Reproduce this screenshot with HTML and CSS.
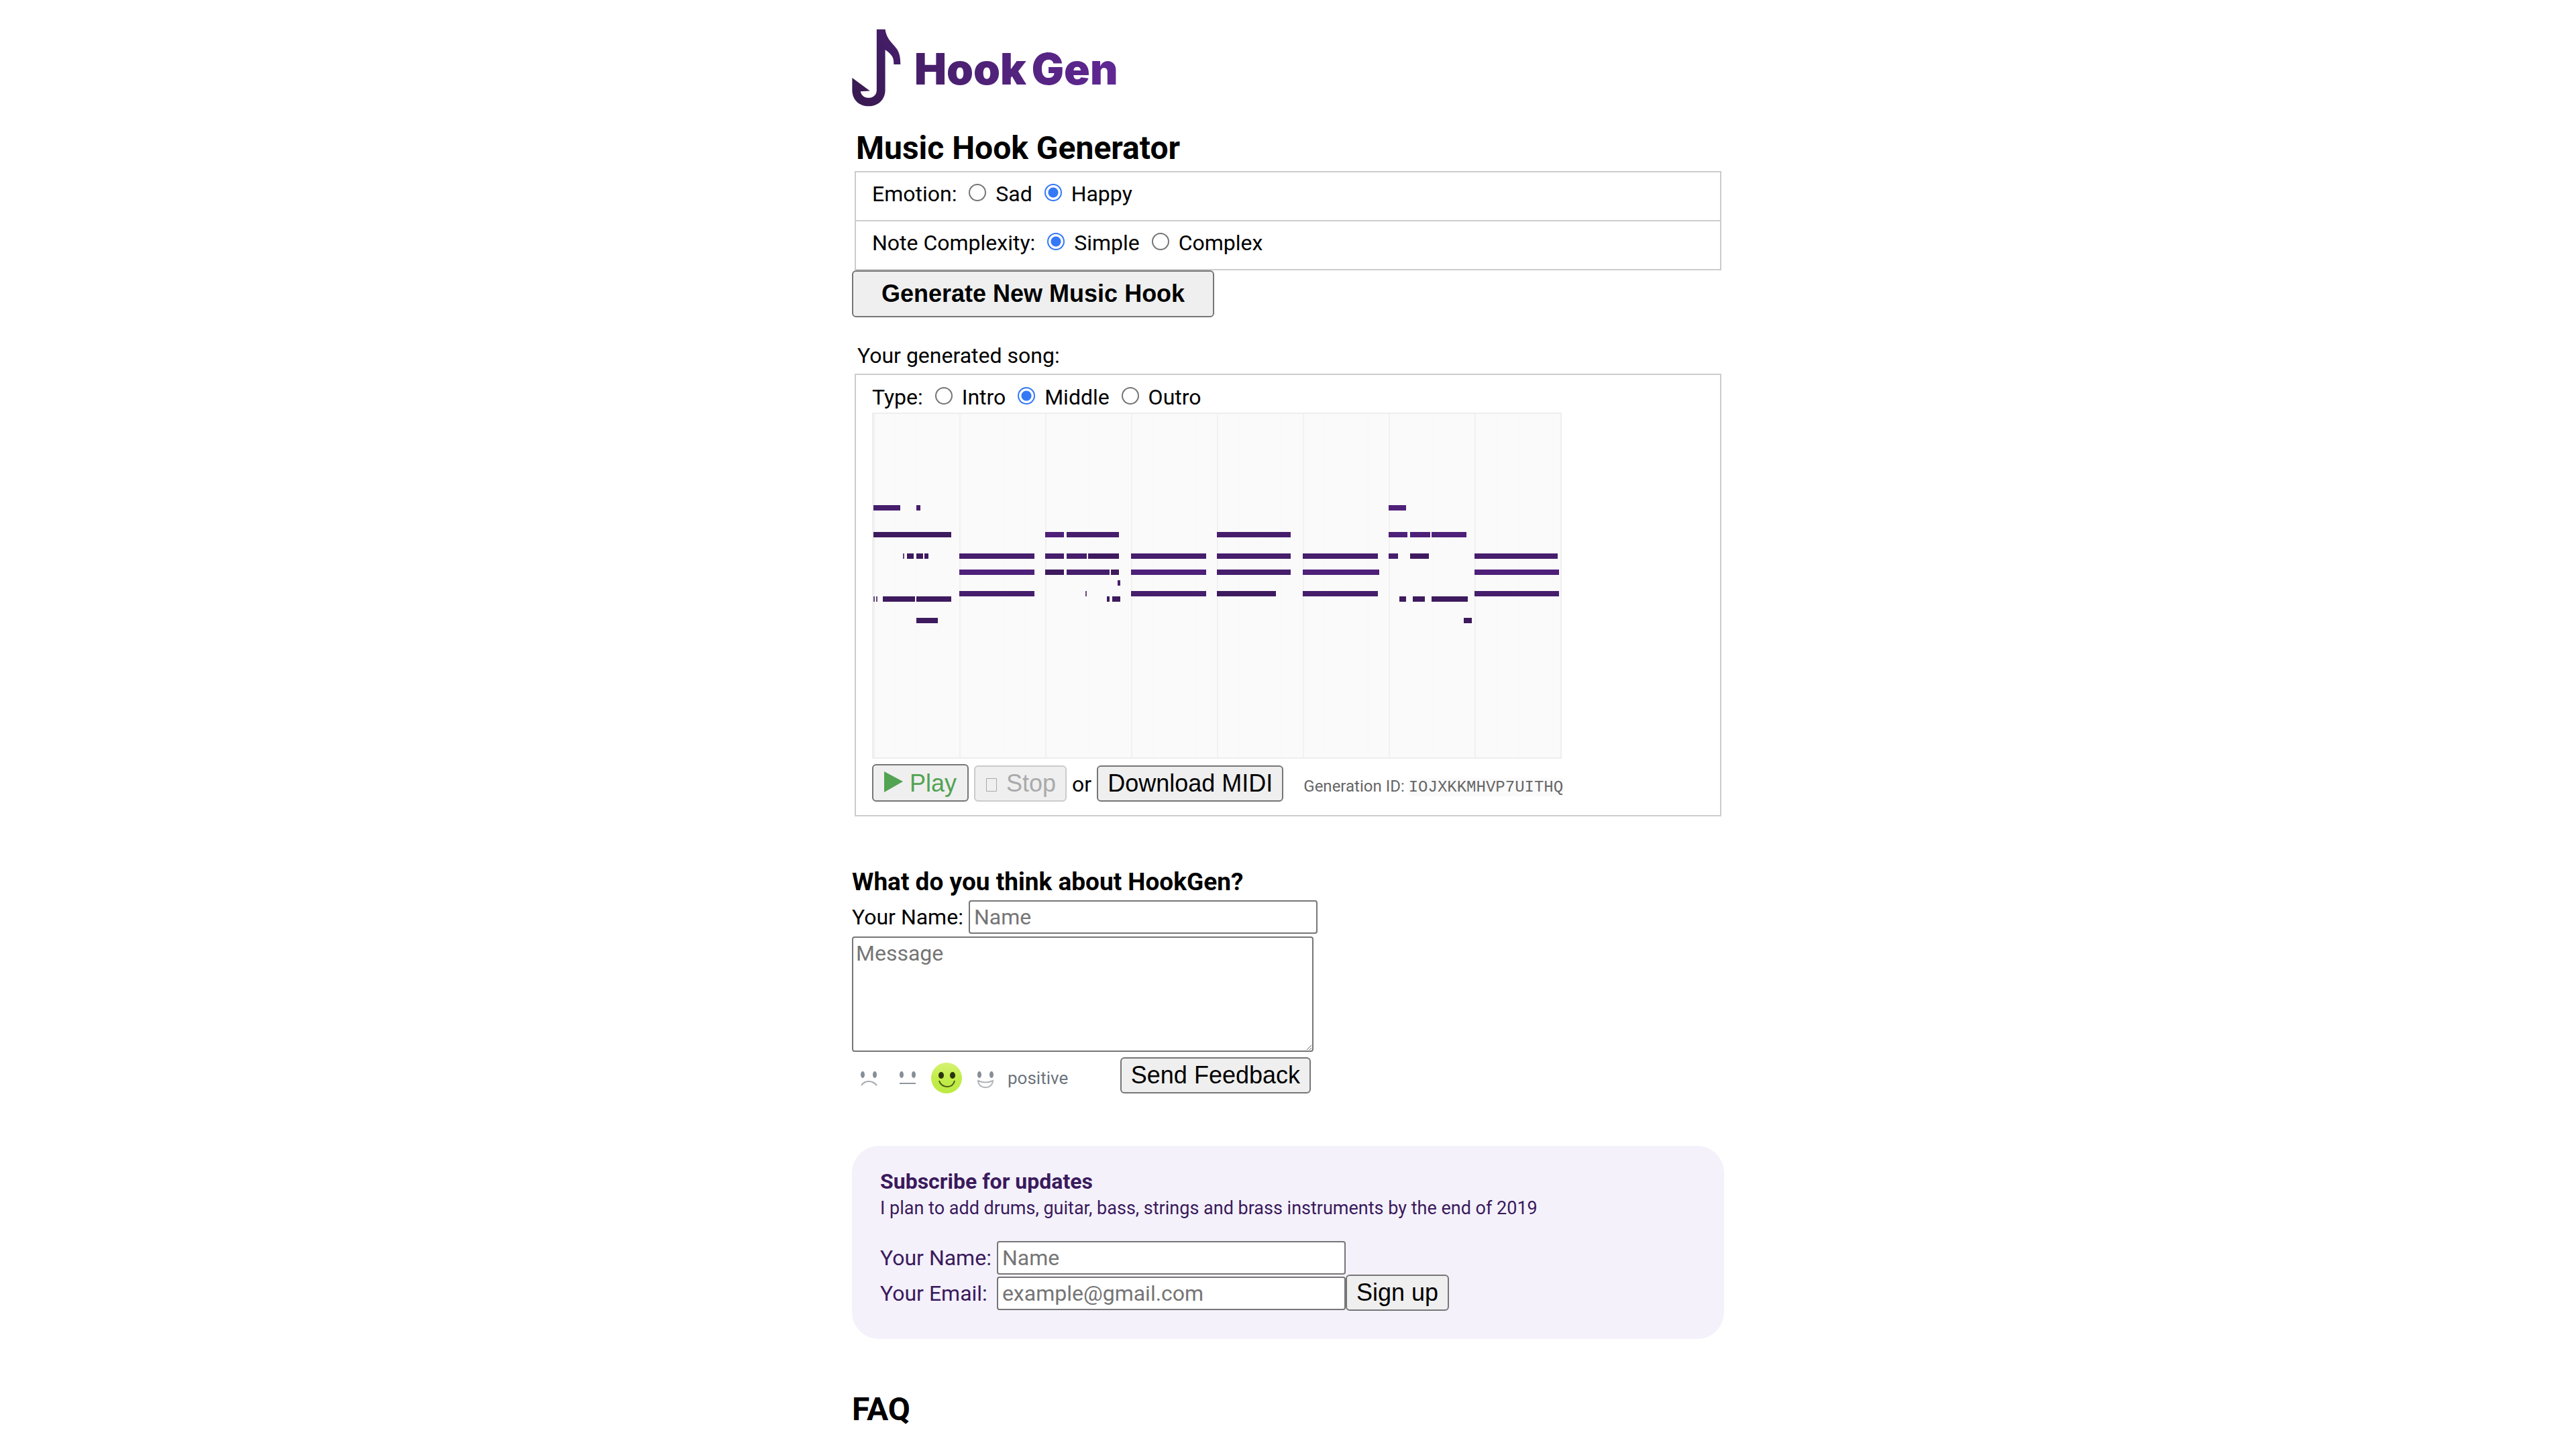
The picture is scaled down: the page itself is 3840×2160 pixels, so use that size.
FILE: index.html
```html
<!DOCTYPE html>
<html lang="en">
<head>
<meta charset="utf-8">
<title>Hook Gen</title>
<link rel="stylesheet" href="styles.css">
</head>
<body>
<main class="page">
  <header class="logo">
    <svg class="logo-mark" viewBox="24 28 218 346" aria-hidden="true">
      <defs><linearGradient id="mark" x1="0" y1="1" x2="1" y2="0"><stop offset="0" stop-color="#38194f"/><stop offset="1" stop-color="#461e6c"/></linearGradient></defs>
      <path fill="url(#mark)" d="M134 30H172C176 60 190 78 205 95C228 120 240 135 240 186H210C211 155 203 143 172 121V300C172 345 138 372 98 372C58 372 25 345 25 300V246L104 304L62 306C66 325 80 335 98 335C120 335 134 320 134 300Z"/>
    </svg>
    <span class="logo-text"><span>Hook</span><span>Gen</span></span>
  </header>

  <section class="generator">
    <h1 class="title indent">Music Hook Generator</h1>
    <div class="options">
      <div class="option" role="radiogroup" aria-label="Emotion">Emotion: <label><input type="radio" name="emotion"> Sad</label> <label><input type="radio" name="emotion" checked> Happy</label></div>
      <div class="option" role="radiogroup" aria-label="Note Complexity">Note Complexity: <label><input type="radio" name="complexity" checked> Simple</label> <label><input type="radio" name="complexity"> Complex</label></div>
    </div>
    <button class="btn btn-generate" type="button">Generate New Music Hook</button>
  </section>

  <section class="song">
    <p class="song-label">Your generated song:</p>
    <div class="song-box">
      <div role="radiogroup" aria-label="Type">Type: <label><input type="radio" name="type"> Intro</label> <label><input type="radio" name="type" checked> Middle</label> <label><input type="radio" name="type"> Outro</label></div>
      <svg class="roll" viewBox="0 0 1024 512" role="img" aria-label="Piano roll">
        <defs>
          <pattern id="bars" width="128" height="512" patternUnits="userSpaceOnUse">
            <path fill="#f9f9f9" d="M32 0h2v512h-2zM64 0h2v512h-2zM96 0h2v512h-2z"/>
            <path fill="#f1f1f1" d="M0 0h2v512H0z"/>
          </pattern>
        </defs>
        <rect width="1024" height="512" fill="url(#bars)"/>
        <g fill="#461e6c">
          <path d="M0 136h40v8H0zM64 136h6v8h-6z"/>
          <path d="M288 176h78v8h-78zM512 176h110v8H512z"/>
          <path d="M128 208h112v8H128zM256 208h28v8h-28zM288 208h30v8h-30zM384 208h112v8H384zM512 208h110v8H512zM640 208h112v8H640zM768 208h14v8h-14zM896 208h124v8H896z"/>
          <path d="M288 232h64v8h-64zM512 232h110v8H512z"/>
          <path d="M364 248h4v8h-4z"/>
          <path d="M128 264h112v8H128zM384 264h112v8H384zM640 264h112v8H640zM896 264h126v8H896z"/>
        </g>
        <g fill="#4e2079">
          <path d="M768 136h26v8h-26zM256 176h28v8h-28zM768 176h28v8h-28zM800 176h30v8h-30zM832 176h52v8h-52z"/>
          <path d="M128 232h112v8H128zM384 232h112v8H384zM640 232h114v8H640zM896 232h126v8H896z"/>
        </g>
        <g fill="#3e1a5e">
          <path d="M0 176h116v8H0zM50 208h10v8H50zM64 208h10v8H64zM76 208h6v8h-6zM320 208h46v8h-46zM800 208h28v8h-28z"/>
          <path d="M256 232h28v8h-28zM354 232h12v8h-12zM512 264h88v8h-88z"/>
          <path d="M14 272h48v8H14zM64 272h52v8H64zM348 272h4v8h-4zM356 272h12v8h-12zM784 272h10v8h-10zM804 272h18v8h-18zM832 272h54v8h-54z"/>
          <path d="M64 304h32v8H64zM880 304h12v8h-12z"/>
        </g>
        <path fill="#3e1a5e" opacity=".8" d="M44 208h2v8h-2zM316 264h2v8h-2zM0 272h2v8H0zM4 272h2v8H4z"/>
      </svg>
      <div class="controls">
        <button class="btn btn-play" type="button"><svg class="icon-play" viewBox="0 0 28 32" aria-hidden="true"><path fill="currentColor" d="M0 0L28 15L0 31Z"/></svg> Play</button>
        <button class="btn btn-stop" type="button" disabled><svg class="icon-stop" viewBox="0 0 16 20" aria-hidden="true"><path fill="none" stroke="currentColor" d="M.5.5h15v19H.5z"/></svg> Stop</button>
        <span>or</span>
        <button class="btn" type="button">Download MIDI</button>
        <span class="generation">Generation ID: <code>IOJXKKMHVP7UITHQ</code></span>
      </div>
    </div>
  </section>

  <form class="feedback">
    <h2 class="subtitle">What do you think about HookGen?</h2>
    <div class="field"><label for="fb-name">Your Name:</label><input class="text" id="fb-name" type="text" placeholder="Name"></div>
    <textarea class="text message" aria-label="Message" placeholder="Message"></textarea>
    <div class="send-row">
      <div class="moods">
        <button class="mood" type="button" aria-label="negative"><svg viewBox="0 0 46 46"><g fill="#868e96"><ellipse cx="14" cy="18" rx="3" ry="5"/><ellipse cx="32" cy="18" rx="3" ry="5"/></g><path fill="none" stroke="#a4a9af" stroke-width="2" d="M12 34Q16 28 23 28T35 34"/></svg></button>
        <button class="mood" type="button" aria-label="neutral"><svg viewBox="0 0 46 46"><g fill="#868e96"><ellipse cx="14" cy="18" rx="3" ry="5"/><ellipse cx="32" cy="18" rx="3" ry="5"/></g><path stroke="#9096a0" stroke-width="2" d="M11 31H35"/></svg></button>
        <button class="mood" type="button" aria-label="positive" aria-pressed="true"><svg viewBox="0 0 46 46"><defs><linearGradient id="face" x1="0" y1="0" x2="0" y2="1"><stop offset="0" stop-color="#d6f274"/><stop offset=".5" stop-color="#c2ec4a"/><stop offset="1" stop-color="#bdea43"/></linearGradient></defs><circle cx="23" cy="23" r="23" fill="url(#face)"/><g fill="#29330b"><ellipse cx="15" cy="19" rx="4" ry="5"/><ellipse cx="32" cy="19" rx="4" ry="5"/></g><path fill="none" stroke="#4c5c18" stroke-width="2" d="M12 27C13 32 18 36 24 36S34 32 35 27"/></svg></button>
        <button class="mood" type="button" aria-label="very positive"><svg viewBox="0 0 46 46"><g fill="#868e96"><ellipse cx="14" cy="18" rx="3" ry="5"/><ellipse cx="32" cy="18" rx="3" ry="5"/></g><path fill="none" stroke="#b1b6bb" stroke-width="2" d="M12 27Q23 32 34 27C34 33 29 37 23 37S12 33 12 27Z"/></svg></button>
        <output class="mood-name">positive</output>
      </div>
      <button class="btn" type="button">Send Feedback</button>
    </div>
  </form>

  <form class="subscribe">
    <h2 class="subscribe-title">Subscribe for updates</h2>
    <p class="subscribe-note">I plan to add drums, guitar, bass, strings and brass instruments by the end of 2019</p>
    <div class="subscribe-grid">
      <label for="sub-name">Your Name:</label><input class="text" id="sub-name" type="text" placeholder="Name">
      <label for="sub-email">Your Email:</label><div class="email-row"><input class="text" id="sub-email" type="email" placeholder="example@gmail.com"><button class="btn" type="button">Sign up</button></div>
    </div>
  </form>

  <h2 class="title">FAQ</h2>
</main>
</body>
</html>
```
FILE: styles.css
```css
* { box-sizing: border-box; }

body {
  margin: 0;
  background: #fff;
  color: #000;
  font: 32px/38px Roboto, sans-serif;
}

h1, h2, p { margin: 0; }

.page {
  max-width: 1300px;
  margin: 0 auto;
  padding-top: 43px;
}

.logo {
  display: flex;
  gap: 20px;
  height: 116px;
  margin-bottom: 34px;
}

.logo-mark { width: 73px; height: 116px; }

.logo-text {
  display: flex;
  gap: 8px;
  align-self: flex-start;
  padding-top: 24px;
  font: 900 64px/72px Inter, sans-serif;
  background: linear-gradient(90deg, #461e68, #602894);
  -webkit-background-clip: text;
  background-clip: text;
  color: transparent;
}

.title { font-size: 48px; line-height: 56px; font-weight: 700; }

.indent { margin-left: 6px; }

.options {
  margin: 6px 4px 0;
  border: 2px solid #ccc;
}

.option { padding: 13px 24px 20px; }

.option + .option { border-top: 2px solid #ccc; }

input[type="radio"] {
  appearance: none;
  width: 26px;
  height: 26px;
  margin: 0 6px 0 10px;
  border: 2px solid #767676;
  border-radius: 50%;
  background: #fff;
}

input[type="radio"]:checked {
  border-color: #3478f6;
  background: radial-gradient(circle, #3478f6 7px, #fff 8px);
}

.btn {
  padding: 4px 14px;
  border: 2px solid #767676;
  border-radius: 6px;
  background: #efefef;
  color: #000;
  font: 36px/42px "Liberation Sans", Arial, sans-serif;
  white-space: nowrap;
}

.btn-generate {
  display: block;
  padding: 12px 42px;
  font-weight: 700;
}

.btn-play { padding: 6px 16px 4px; color: #52a352; }

.btn-stop {
  padding-left: 16px;
  border-color: #cbcbcb;
  color: #aaa;
}

.icon-play { width: 28px; height: 32px; margin-bottom: -2px; }

.icon-stop { width: 16px; height: 20px; margin-right: 4px; }

.song-label { margin: 38px 8px 8px; }

.song-box {
  margin: 0 4px;
  padding: 14px 24px 20px;
  border: 2px solid #ccc;
}

.roll {
  display: block;
  width: 100%;
  max-width: 1028px;
  margin: 4px 0 8px;
  border: 2px solid #eee;
  background: #fafafa;
}

.controls {
  display: flex;
  align-items: baseline;
  gap: 8px;
}

.generation {
  margin-left: 22px;
  color: #666;
  font-size: 24px;
  line-height: 28px;
}

.generation code {
  background: #fafafa;
  font: 24px "Liberation Mono", monospace;
}

.feedback { margin-top: 77px; }

.subtitle { margin-bottom: 6px; font-size: 37px; line-height: 42px; }

.field {
  display: flex;
  align-items: baseline;
  gap: 8px;
}

.text {
  width: 520px;
  padding: 4px;
  border: 2px solid #767676;
  border-radius: 4px;
  background: #fff;
  color: #000;
  font: 32px/38px Roboto, sans-serif;
}

input.text { height: 50px; padding: 4px 6px; }

.text::placeholder { color: #757575; }

.message {
  display: block;
  width: 688px;
  height: 172px;
  margin: 4px 0 8px;
}

.send-row {
  display: flex;
  justify-content: space-between;
  align-items: center;
  max-width: 684px;
}

.moods {
  display: flex;
  align-items: center;
  gap: 12px;
  padding: 8px 0 0 2px;
}

.mood {
  width: 46px;
  height: 46px;
  padding: 0;
  border: 0;
  background: none;
}

.mood svg { display: block; }

.mood-name { margin-left: -2px; color: #6c757d; font-size: 26px; line-height: 30px; }

.subscribe {
  margin: 78px 0 77px;
  padding: 34px 42px 42px;
  border-radius: 40px;
  background: #f4f1fb;
  color: #3a1a5c;
}

.subscribe-title { margin-bottom: 6px; font-size: 32px; line-height: 38px; }

.subscribe-note { margin-bottom: 34px; font-size: 27px; line-height: 30px; }

.subscribe-grid {
  display: grid;
  grid-template-columns: max-content 1fr;
  column-gap: 8px;
  align-items: baseline;
}

.email-row { display: flex; align-items: baseline; }
```
